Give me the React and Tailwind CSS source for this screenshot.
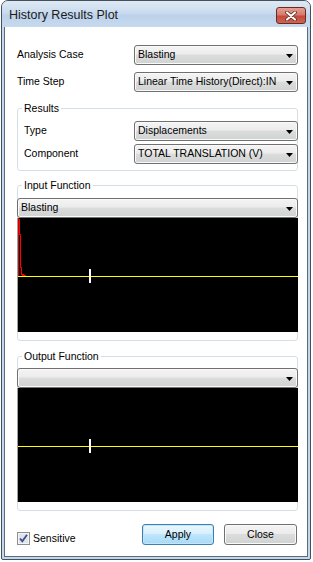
import React from "react";

const comboBg =
  "bg-[linear-gradient(to_bottom,#f4f4f4_0%,#ececec_45%,#dcdcdc_50%,#d0d3d3_100%)]";

function Combo({ text, className = "" }) {
  return (
    <div
      className={`relative h-[20px] border border-[#707070] rounded-[3px] ${comboBg} shadow-[inset_0_0_0_1px_#fafafa] flex items-center pl-[3px] pr-[15px] overflow-hidden ${className}`}
    >
      <span className="whitespace-nowrap text-black">{text}</span>
      <svg
        className="absolute right-[4px] top-[8px]"
        width="7"
        height="4"
        viewBox="0 0 7 4"
      >
        <path d="M0 0H7L3.5 4Z" fill="#000" />
      </svg>
    </div>
  );
}

function Group({ title, className = "", children }) {
  return (
    <div
      className={`relative border border-[#d5dfe5] rounded-[3px] ${className}`}
    >
      <span className="absolute left-[4px] top-[-7px] bg-white px-[2px] leading-[13px] text-black">
        {title}
      </span>
      {children}
    </div>
  );
}

function Plot({ showRed }) {
  return (
    <div className="relative -mx-[1px] h-[114px] bg-black border-l border-[#a0a0a0]">
      <svg
        className="absolute left-0 top-0"
        width="280"
        height="114"
        viewBox="0 0 280 114"
        shapeRendering="crispEdges"
      >
        <rect x="0" y="58" width="280" height="1" fill="#ffff00" />
        <rect x="71" y="51" width="2" height="14" fill="#ffffff" />
        {showRed && (
          <g fill="#ff0000">
            <rect x="0" y="0" width="1" height="58" fill="#d00000" />
            <rect x="1" y="1" width="1" height="16" />
            <rect x="2" y="16" width="1" height="34" />
            <rect x="3" y="49" width="1" height="8" />
            <rect x="4" y="56" width="2" height="2" />
            <rect x="6" y="57" width="2" height="1" />
          </g>
        )}
      </svg>
    </div>
  );
}

export default function App() {
  return (
    <div className="w-[313px] h-[562px] bg-white font-['Liberation_Sans',Arial,sans-serif] text-[10.5px] text-black">
      <div className="ml-[1px] w-[310px] h-[560px] border border-[#44505c] rounded-t-[7px] rounded-b-[2px] overflow-hidden bg-[#c3d7ed] flex flex-col">
        {/* Title bar */}
        <div className="h-[26px] shrink-0 flex items-center justify-between pl-[7px] pr-[4px] bg-[linear-gradient(to_bottom,#dfe9f5_0%,#cadbee_45%,#bcd2ea_55%,#c6d9ee_100%)]">
          <span className="text-[12.5px] text-[#1b1b1b] mt-[2px]">History Results Plot</span>
          <div className="mt-[3px] w-[30px] h-[17px] rounded-[3px] border border-[#6e2820] bg-[linear-gradient(to_bottom,#e3a196_0%,#d67a6c_45%,#c44a39_55%,#cc6552_100%)] flex items-center justify-center">
            <svg width="12" height="10" viewBox="0 0 12 10">
              <path
                d="M2 1.5L10 8.5M10 1.5L2 8.5"
                stroke="#5a1e18"
                strokeWidth="3.6"
                strokeLinecap="round"
              />
              <path
                d="M2 1.5L10 8.5M10 1.5L2 8.5"
                stroke="#ffffff"
                strokeWidth="2.2"
                strokeLinecap="round"
              />
            </svg>
          </div>
        </div>

        {/* Client area */}
        <div className="flex-1 mx-[2px] mb-[2px] border-x border-b border-[#5b6b7b] bg-white pt-[18px] pl-[12px] pr-[9px] flex flex-col">
          <div className="flex items-center">
            <span className="w-[117px]">Analysis Case</span>
            <Combo text="Blasting" className="w-[164px]" />
          </div>
          <div className="flex items-center mt-[7px]">
            <span className="w-[117px]">Time Step</span>
            <Combo text="Linear Time History(Direct):IN" className="w-[164px]" />
          </div>

          <Group title="Results" className="mt-[16px] pt-[12px] pb-[6px]">
            <div className="flex items-center pl-[6px]">
              <span className="w-[110px]">Type</span>
              <Combo text="Displacements" className="flex-1 -mr-[1px]" />
            </div>
            <div className="flex items-center pl-[6px] mt-[3px]">
              <span className="w-[110px]">Component</span>
              <Combo text="TOTAL TRANSLATION (V)" className="flex-1 -mr-[1px]" />
            </div>
          </Group>

          <Group title="Input Function" className="mt-[14px] pt-[12px] pb-[8px]">
            <Combo text="Blasting" className="-mx-[1px]" />
            <Plot showRed />
          </Group>

          <Group title="Output Function" className="mt-[15px] pt-[11px] pb-[8px]">
            <Combo text="" className="-mx-[1px]" />
            <Plot />
          </Group>

          <div className="flex items-start mt-[13px]">
            <div className="flex items-center mt-[7px]">
              <svg width="13" height="13" viewBox="0 0 13 13">
                <rect x="0.5" y="0.5" width="12" height="12" fill="#f4f4f4" stroke="#8e8f8f" />
                <rect x="2" y="2" width="9" height="9" fill="#dfe3ea" />
                <path
                  d="M3 6.5L5.3 9.2L10 2.8"
                  stroke="#3b4f8e"
                  strokeWidth="1.8"
                  fill="none"
                />
              </svg>
              <span className="ml-[3px]">Sensitive</span>
            </div>
            <div className="ml-auto mr-[1px] flex gap-[10px]">
              <div className="w-[72px] h-[21px] rounded-[3px] border border-[#3c7fb1] bg-[linear-gradient(to_bottom,#eaf6fd_0%,#d9f0fc_45%,#bee6fd_50%,#a7d9f5_100%)] shadow-[inset_0_0_0_1px_#c6e6f8] flex items-center justify-center">
                Apply
              </div>
              <div className={`w-[73px] h-[21px] rounded-[3px] border border-[#707070] ${comboBg} shadow-[inset_0_0_0_1px_#fafafa] flex items-center justify-center`}>
                Close
              </div>
            </div>
          </div>
        </div>
      </div>
    </div>
  );
}
